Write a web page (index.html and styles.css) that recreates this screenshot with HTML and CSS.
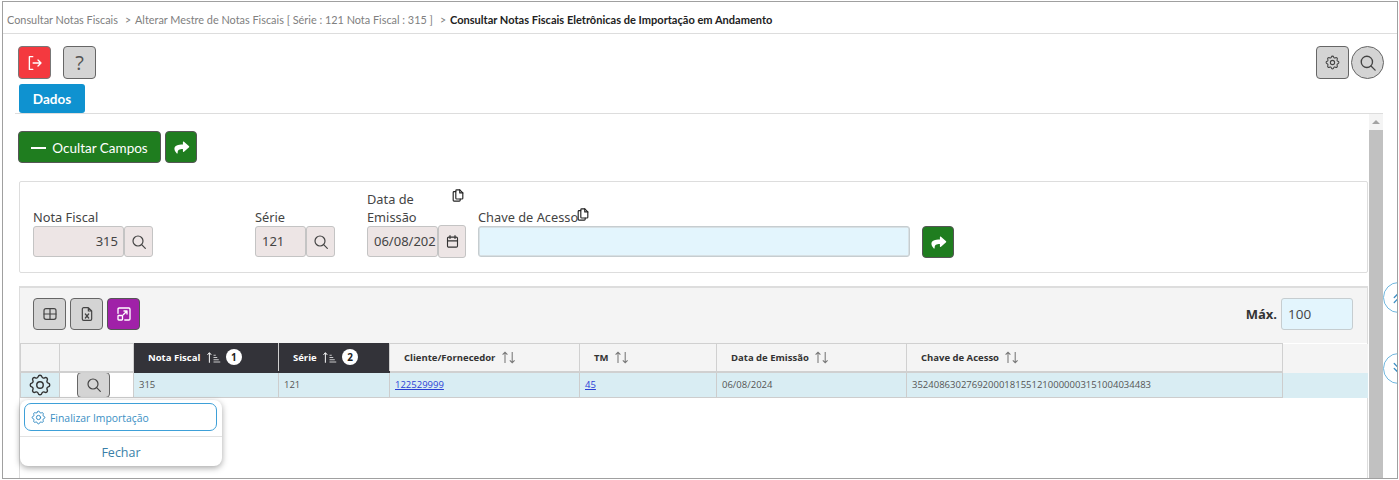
FILE: index.html
```html
<!DOCTYPE html>
<html lang="pt-BR">
<head>
<meta charset="utf-8">
<title>Consultar Notas Fiscais Eletrônicas de Importação em Andamento</title>
<link rel="stylesheet" href="styles.css">
</head>
<body>
<svg class="defs" width="0" height="0" aria-hidden="true">
  <symbol id="i-search" viewBox="0 0 24 24"><circle cx="10.5" cy="10.5" r="7.5"/><path d="M16 16l5.5 5.5"/></symbol>
  <symbol id="i-gear" viewBox="0 0 24 24"><path d="M10.325 4.317c.426-1.756 2.924-1.756 3.35 0a1.724 1.724 0 0 0 2.573 1.066c1.543-.94 3.31.826 2.37 2.37a1.724 1.724 0 0 0 1.065 2.572c1.756.426 1.756 2.924 0 3.35a1.724 1.724 0 0 0-1.066 2.573c.94 1.543-.826 3.31-2.37 2.37a1.724 1.724 0 0 0-2.572 1.065c-.426 1.756-2.924 1.756-3.35 0a1.724 1.724 0 0 0-2.573-1.066c-1.543.94-3.31-.826-2.37-2.37a1.724 1.724 0 0 0-1.065-2.572c-1.756-.426-1.756-2.924 0-3.35a1.724 1.724 0 0 0 1.066-2.573c-.94-1.543.826-3.31 2.37-2.37c1 .608 2.296.07 2.572-1.065z"/><circle cx="12" cy="12" r="3"/></symbol>
  <symbol id="i-share" viewBox="0 0 24 24"><path class="solid" d="M14 4.2c0-.6.7-.9 1.1-.5l7.6 6.7c.3.3.3.8 0 1.1l-7.6 6.7c-.4.4-1.1.1-1.1-.5v-3.6c-4.8.1-7.6 1-7.4 5.6.1.8-.7 1.1-1.2.6C3.6 18.4 2 16.400 2 13.800 2 9.200 7 7.900 14 7.800z"/></symbol>
  <symbol id="i-copy" viewBox="0 0 16 16"><path d="M5.500 3.500h-2a1 1 0 0 0-1 1v9a1 1 0 0 0 1 1h6a1 1 0 0 0 1-1v-1.500"/><path d="M5.500 2.500a1 1 0 0 1 1-1h3.500l3.500 3.500v6a1 1 0 0 1-1 1h-6a1 1 0 0 1-1-1z"/><path d="M10 1.500v3.500h3.500"/></symbol>
  <symbol id="i-sort-asc" viewBox="0 0 20 16"><path d="M4.500 15V2M2 4.500l2.500-3 2.500 3"/><path class="thin" d="M10 5h3M10 8h5M10 11h7M10 14h9"/></symbol>
  <symbol id="i-sort" viewBox="0 0 20 16"><path d="M5 15V1.500M2 4.500l3-3 3 3"/><path d="M14 1v13.500M11 11.500l3 3 3-3"/></symbol>
  <symbol id="i-chev-up" viewBox="0 0 24 24"><path d="M6 12l6-6 6 6M6 19l6-6 6 6"/></symbol>
  <symbol id="i-chev-down" viewBox="0 0 24 24"><path d="M6 5l6 6 6-6M6 12l6 6 6-6"/></symbol>
</svg>

<div class="frame">
  <nav class="crumbs">
    <span>Consultar Notas Fiscais</span><span class="sep">&gt;</span>
    <span>Alterar Mestre de Notas Fiscais [ Série : 121 Nota Fiscal : 315 ]</span><span class="sep">&gt;</span>
    <strong>Consultar Notas Fiscais Eletrônicas de Importação em Andamento</strong>
  </nav>

  <div class="toolbar">
    <div class="toolbar-left">
      <button class="btn btn-red" aria-label="Sair"><svg class="ico" viewBox="0 0 24 24"><path d="M9 3.500H4.500v17H9M9.500 12H20M16 8l4 4-4 4"/></svg></button>
      <button class="btn btn-help">?</button>
    </div>
    <div class="toolbar-right">
      <button class="btn btn-gray" aria-label="Configurar"><svg class="ico ico-sm"><use href="#i-gear"/></svg></button>
      <button class="btn btn-gray btn-round" aria-label="Pesquisar"><svg class="ico ico-lg"><use href="#i-search"/></svg></button>
    </div>
  </div>

  <div class="tabs"><span class="tab">Dados</span></div>

  <div class="pane">
    <main class="content">
      <div class="actions">
        <button class="btn btn-green btn-wide"><span class="minus"></span>Ocultar Campos</button>
        <button class="btn btn-green btn-share" aria-label="Avançar"><svg class="ico-fill"><use href="#i-share"/></svg></button>
      </div>

      <section class="filters">
        <div class="field f-nota">
          <label class="lbl">Nota Fiscal</label>
          <div class="group">
            <span class="inp inp-num">315</span>
            <button class="addon" aria-label="Buscar"><svg class="ico ico-md"><use href="#i-search"/></svg></button>
          </div>
        </div>
        <div class="field f-serie">
          <label class="lbl">Série</label>
          <div class="group">
            <span class="inp">121</span>
            <button class="addon" aria-label="Buscar"><svg class="ico ico-md"><use href="#i-search"/></svg></button>
          </div>
        </div>
        <div class="field f-data">
          <label class="lbl lbl-wrap">Data de Emissão<svg class="copy copy-a"><use href="#i-copy"/></svg></label>
          <div class="group">
            <span class="inp inp-clip">06/08/202</span>
            <button class="addon addon-tall" aria-label="Calendário"><svg class="ico ico-cal" viewBox="0 0 24 24"><rect x="4" y="5" width="16" height="16" rx="2"/><path d="M4 11h16M8 2.500V7M16 2.500V7"/></svg></button>
          </div>
        </div>
        <div class="field f-chave">
          <label class="lbl">Chave de Acesso<svg class="copy copy-b"><use href="#i-copy"/></svg></label>
          <span class="inp inp-blue"></span>
        </div>
        <button class="btn btn-green btn-share btn-go" aria-label="Avançar"><svg class="ico-fill"><use href="#i-share"/></svg></button>
      </section>

      <section class="results">
        <div class="results-bar">
          <div class="results-tools">
            <button class="btn btn-gray" aria-label="Colunas"><svg class="ico ico-md" viewBox="0 0 24 24"><rect x="3" y="4" width="18" height="16" rx="3"/><path d="M12 4v16M3 12h18"/></svg></button>
            <button class="btn btn-gray" aria-label="Excel"><svg class="ico ico-md" viewBox="0 0 24 24"><path d="M14 2.500H7a2 2 0 0 0-2 2v15a2 2 0 0 0 2 2h10a2 2 0 0 0 2-2V7.500zM14 2.500v5h5"/><path class="x" d="M9.500 12l5 6M14.500 12l-5 6"/></svg></button>
            <button class="btn btn-purple" aria-label="Expandir"><svg class="ico ico-md" viewBox="0 0 24 24"><path d="M4 11V5.500A1.500 1.500 0 0 1 5.500 4h13A1.500 1.500 0 0 1 20 5.500v13a1.500 1.500 0 0 1-1.500 1.500H13"/><rect x="4" y="14" width="6" height="6" rx="1"/><path d="M11 13l5-5M12 8h4v4"/></svg></button>
          </div>
          <div class="max"><b>Máx.</b><span class="inp inp-blue inp-max">100</span></div>
        </div>

        <table class="grid">
          <colgroup>
            <col class="c1"><col class="c2"><col class="c3"><col class="c4"><col class="c5"><col class="c6"><col class="c7"><col class="c8"><col class="c9">
          </colgroup>
          <thead>
            <tr>
              <th></th><th></th>
              <th class="dark">Nota Fiscal <svg class="sort-a"><use href="#i-sort-asc"/></svg><span class="badge">1</span></th>
              <th class="dark">Série <svg class="sort-a"><use href="#i-sort-asc"/></svg><span class="badge">2</span></th>
              <th>Cliente/Fornecedor <svg class="sort"><use href="#i-sort"/></svg></th>
              <th>TM <svg class="sort"><use href="#i-sort"/></svg></th>
              <th>Data de Emissão <svg class="sort"><use href="#i-sort"/></svg></th>
              <th>Chave de Acesso <svg class="sort"><use href="#i-sort"/></svg></th>
              <th class="filler"></th>
            </tr>
          </thead>
          <tbody>
            <tr>
              <td class="cell-gear"><svg class="ico ico-gear"><use href="#i-gear"/></svg></td>
              <td class="cell-view"><button class="btn btn-gray btn-view" aria-label="Ver"><svg class="ico ico-md"><use href="#i-search"/></svg></button></td>
              <td>315</td>
              <td>121</td>
              <td><a href="#">122529999</a></td>
              <td><a href="#">45</a></td>
              <td>06/08/2024</td>
              <td>35240863027692000181551210000003151004034483</td>
              <td class="filler"></td>
            </tr>
          </tbody>
        </table>
      </section>
    </main>

    <div class="scrollbar">
      <div class="arrow"></div>
      <div class="thumb"></div>
    </div>

    <button class="side side-up" aria-label="Subir"><svg class="ico"><use href="#i-chev-up"/></svg></button>
    <button class="side side-down" aria-label="Descer"><svg class="ico"><use href="#i-chev-down"/></svg></button>

    <div class="menu">
      <button class="menu-item"><svg class="ico"><use href="#i-gear"/></svg><span class="menu-label">Finalizar Importação</span></button>
      <button class="menu-close">Fechar</button>
    </div>
  </div>
</div>
</body>
</html>
```

FILE: styles.css
```css
* { box-sizing: border-box; }
html, body { margin: 0; padding: 0; background: #fff; overflow: hidden; }
body { width: 1399px; height: 480px; font-family: "Lato", sans-serif; color: #333; }
.defs { position: absolute; }
button { font: inherit; padding: 0; cursor: pointer; }

.frame {
  width: 1396px; height: 478px; margin: 1px 0 0 2px;
  border: 1px solid #a0a0a0;
  display: flex; flex-direction: column; overflow: hidden;
}

.crumbs {
  flex: none; height: 32px; padding: 4px 0 0 4px;
  display: flex; align-items: center;
  font-size: 10.880px; color: #808080;
  border-bottom: 1px solid #ddd;
  white-space: nowrap;
}
.crumbs .sep { margin: 0 4px 0 7px; font-size: 10.500px; }
.crumbs strong { color: #222; font-weight: 700; font-size: 11.050px; }

.toolbar { flex: none; display: flex; justify-content: space-between; padding: 12px 13px 0 15px; height: 50px; }
.toolbar-left { display: flex; gap: 12px; }
.toolbar-right { display: flex; gap: 2px; }

.btn {
  width: 33px; height: 33px;
  display: inline-flex; align-items: center; justify-content: center;
  border: 1px solid #666; border-radius: 4px;
  background: #d4d4d4; color: #555;
}
.btn-red { background: #f4393f; color: #fff; border-color: #777; }
.btn-help { font-family: "Open Sans", sans-serif; font-weight: 400; font-size: 20px; color: #555; }
.btn-round { border-radius: 50%; }
.btn-green { background: #1f7d1f; color: #fff; border-color: #555; }
.btn-purple { background: #a021a8; color: #fff; border-color: #555; }

.ico { width: 18px; height: 18px; fill: none; stroke: currentColor; stroke-width: 1.8; stroke-linecap: round; stroke-linejoin: round; }
.ico-sm { width: 17px; height: 17px; color: #444; stroke-width: 1.500; }
.ico-md { width: 16px; height: 16px; color: #444; }
.btn-purple .ico-md { color: #fff; width: 18px; height: 18px; }
.ico-lg { width: 18px; height: 18px; color: #444; }
.ico-fill { width: 17px; height: 17px; fill: #fff; }

.tabs { flex: none; height: 30px; margin: 0 14px 0 12px; padding-left: 4px; border-bottom: 1px solid #ddd; }
.tab {
  display: flex; align-items: center; justify-content: center;
  width: 66px; height: 29px; border-radius: 3px;
  background: #0f92d0; color: #fff; font-weight: 700; font-size: 13.500px;
}

.pane { position: relative; flex: 1; min-height: 0; display: flex; }
.content { flex: none; width: 1366px; padding: 17px 0 0 15px; overflow: hidden; }

.actions { display: flex; gap: 4px; height: 32px; }
.btn-wide { width: 143px; height: 32px; padding-top: 1px; font-size: 13.500px; gap: 6px; border-radius: 4px; }
.minus { width: 15px; height: 2px; background: #fff; }
.btn-share { width: 32px; height: 32px; }

.filters {
  margin: 18px 0 0 1px; width: 1349px; height: 92px;
  border: 1px solid #ddd; border-radius: 2px;
  display: flex; align-items: flex-start; padding: 0 0 0 13px;
  font-family: "Noto Sans", sans-serif; font-size: 12.800px; color: #444;
}
.field { display: flex; flex-direction: column; justify-content: flex-end; height: 75px; }
.f-nota { width: 222px; }
.f-serie { width: 112px; }
.f-data { width: 111px; }
.f-chave { width: 432px; }
.lbl { line-height: 18px; height: 18px; white-space: nowrap; position: relative; display: block; }
.lbl-wrap { white-space: normal; width: 60px; height: 36px; }
.copy { position: absolute; width: 14px; height: 15px; fill: none; stroke: #222; stroke-width: 1.300; stroke-linejoin: round; stroke-linecap: round; }
.copy-a { left: 84px; top: -2px; }
.copy-b { left: 98px; top: -1px; }
.group { display: flex; align-items: center; }
.inp {
  display: block; height: 31px; line-height: 29px; padding: 0 6px;
  background: #ede5e5; border: 1px solid #c4c4c4; border-radius: 3px;
  font-size: 13px; color: #444;
}
.f-nota .inp { width: 91px; }
.f-serie .inp { width: 51px; }
.inp-num { text-align: right; padding-right: 5px; }
.inp-clip { width: 71px; overflow: hidden; white-space: nowrap; }
.addon {
  width: 29px; height: 31px; display: inline-flex; align-items: center; justify-content: center;
  background: #ede5e5; border: 1px solid #c4c4c4; border-radius: 3px; color: #333;
}
.addon-tall { height: 33px; width: 28px; margin: -1px 0; }
.ico-cal { width: 15px; height: 15px; color: #333; }
.inp-blue { background: #e3f5fd; border-color: #c6cdd0; }
.f-chave .inp-blue { width: 432px; box-shadow: inset 0 0 0 .5px #ccc; }
.btn-go { margin: 44px 0 0 12px; }

.results {
  margin: 13px 0 0 1px; width: 1349px; height: 192px;
  border-top: 2px solid #ddd; border-left: 1px solid #ddd; border-right: 1px solid #ddd;
}
.results-bar {
  height: 55px; background: #f4f4f4; display: flex; justify-content: space-between;
  padding: 10px 14px 0 13px;
}
.results-tools { display: flex; gap: 4px; }
.results-tools .btn { height: 32px; }
.max { display: flex; align-items: center; gap: 4px; height: 32px; font-size: 13px; font-family: "Open Sans", sans-serif; }
.max b { color: #333; }
.inp-max { width: 72px; height: 32px; line-height: 30px; font-size: 13.500px; }

.grid { border-collapse: collapse; table-layout: fixed; width: 1347px; font-family: "Open Sans", sans-serif; font-size: 9.500px; color: #555; }
.c1 { width: 39px; } .c2 { width: 74px; } .c3 { width: 145px; } .c4 { width: 111px; }
.c5 { width: 190px; } .c6 { width: 137px; } .c7 { width: 190px; } .c8 { width: 376px; } .c9 { width: 85px; }
.grid th {
  height: 28px; background: #f4f4f4; border: 1px solid #d0d0d0; border-bottom-width: 2px; text-align: left;
  padding: 0 0 0 14px; font-weight: 700; font-size: 9.500px; color: #333; white-space: nowrap;
}
.grid th.dark { background: #333339; color: #fff; border-color: #333339; border-right-color: #d0d0d0; }
.grid th.filler { border-top: 0; border-right: 0; border-bottom-color: #f4f4f4; }
.sort, .sort-a { width: 16px; height: 15px; margin-left: 3px; vertical-align: -4px; fill: none; stroke: #777; stroke-width: 1.300; }
.sort-a { stroke: #fff; width: 15px; height: 13px; vertical-align: -3px; }
.thin { stroke-width: 1; }
.badge {
  display: inline-block; width: 16px; height: 16px; border-radius: 50%;
  background: #fff; color: #222; font-size: 10px; font-weight: 700; line-height: 16px; text-align: center;
  margin-left: 5px;
}
.grid td { height: 26px; line-height: 14px; background: #d9edf3; border: 1px solid #cdcdcd; padding: 0 5px; white-space: nowrap; }
.grid td.filler { border-right: 0; border-top: 0; border-bottom: 0; }
.grid a { color: #2a3fd6; }
.cell-gear { padding: 0 !important; }
.ico-gear { width: 26px; height: 26px; margin: -4px auto; color: #333; display: block; stroke-width: 1.300; }
.grid .cell-view { background: #fff; padding: 0 0 0 17px; }
.btn-view { height: 26px; margin: -2px 0; display: flex; }

.scrollbar { flex: none; width: 14px; background: #f4f4f4; display: flex; flex-direction: column; }
.arrow { height: 16px; position: relative; }
.arrow::after { content: ""; position: absolute; left: 3px; top: 6px; border: 4px solid transparent; border-top: 0; border-bottom: 4px solid #a3a3a3; }
.thumb { flex: 1; background: #c1c1c1; }

.side {
  position: absolute; left: 1380px; width: 31px; height: 31px; border-radius: 50%;
  background: #fff; border: 1px solid #6fb6de; color: #3d8fc4;
  display: flex; align-items: center; justify-content: center;
}
.side .ico { width: 17px; height: 17px; }
.side-up { top: 168px; }
.side-down { top: 239px; }

.menu {
  position: absolute; left: 17px; top: 286px; width: 202px; height: 66px;
  background: #fff; border-radius: 8px; box-shadow: 0 2px 6px rgba(0,0,0,.35);
  display: flex; flex-direction: column; padding: 3px 5px 0 4px;
}
.menu-item {
  flex: none; height: 28px; display: flex; align-items: center; gap: 3px; padding-left: 5px;
  background: #fff; border: 1px solid #3ea0d8; border-radius: 7px; color: #3a8fc4;
  font-family: "Open Sans", sans-serif; font-size: 10.400px; width: 193px;
}
.menu-label { padding-top: 2px; }
.menu-item .ico { width: 17px; height: 17px; stroke-width: 1.400; }
.menu-close {
  flex: 1; margin: 5px -5px 0 -4px; padding-top: 2px; background: none; border: 0; border-top: 1px solid #e2e2e2;
  color: #3a7fa8; font-family: "Open Sans", sans-serif; font-size: 12.500px;
}
```
